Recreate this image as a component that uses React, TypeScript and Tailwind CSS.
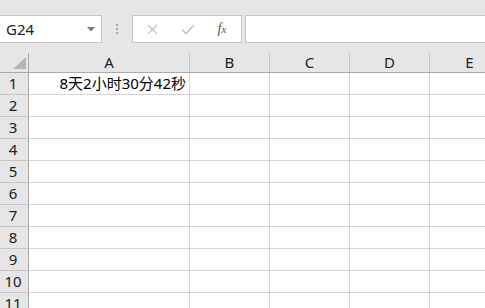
import React from 'react';

const cols = [
  { label: 'A', w: 'w-[161px]' },
  { label: 'B', w: 'w-[80px]' },
  { label: 'C', w: 'w-[80px]' },
  { label: 'D', w: 'w-[80px]' },
  { label: 'E', w: 'w-[80px]' },
];

const rows = Array.from({ length: 11 }, (_, i) => i + 1);

export default function App() {
  return (
    <div className="w-[485px] h-[308px] overflow-hidden bg-[#e6e6e6] font-['Noto_Sans','Noto_Sans_CJK_SC',sans-serif] text-black">
      {/* formula toolbar */}
      <div className="flex items-center pt-[15px] h-[53px] items-start">
        <div className="w-[102px] h-[28px] shrink-0 bg-white border border-l-0 border-[#c6c6c6] flex items-center justify-between pl-[6px] pr-[6px]">
          <span className="text-[15px] leading-none text-[#222]">G24</span>
          <svg width="8" height="5" viewBox="0 0 8 5">
            <path d="M0 0 H8 L4 4.5 Z" fill="#7a7a7a" />
          </svg>
        </div>
        <div className="w-[30px] h-[28px] shrink-0 flex flex-col items-center justify-center gap-[2px]">
          <span className="w-[2px] h-[2px] bg-[#a8a8a8]" />
          <span className="w-[2px] h-[2px] bg-[#a8a8a8]" />
          <span className="w-[2px] h-[2px] bg-[#a8a8a8]" />
        </div>
        <div className="w-[110px] h-[28px] shrink-0 bg-white border border-[#c6c6c6] flex items-center">
          <div className="w-[38px] flex justify-center">
            <svg width="11" height="11" viewBox="0 0 11 11">
              <path d="M1 1 L10 10 M10 1 L1 10" stroke="#c4c4c4" strokeWidth="1.3" fill="none" />
            </svg>
          </div>
          <div className="w-[34px] flex justify-center">
            <svg width="14" height="11" viewBox="0 0 14 11">
              <path d="M1 5.5 L5 9.5 L13 1" stroke="#c4c4c4" strokeWidth="1.6" fill="none" />
            </svg>
          </div>
          <div className="flex-1 flex justify-center pr-[2px]">
            <span className="font-['Liberation_Serif',serif] italic text-[14px] leading-none text-[#555]">
              f<span className="text-[11px]">x</span>
            </span>
          </div>
        </div>
        <div className="ml-[3px] w-[260px] h-[28px] shrink-0 bg-white border border-r-0 border-[#c6c6c6]" />
      </div>

      {/* column header */}
      <div className="flex h-[20px] border-b border-[#a9a9a9]">
        <div className="w-[29px] shrink-0 border-r border-[#a9a9a9] relative">
          <svg className="absolute left-[13px] top-[4px]" width="13" height="12" viewBox="0 0 13 12">
            <path d="M13 0 V12 H0 Z" fill="#b4b4b4" />
          </svg>
        </div>
        {cols.map(c => (
          <div
            key={c.label}
            className={`${c.w} shrink-0 border-r border-[#c6c6c6] flex items-center justify-center text-[15px] leading-none text-[#222]`}
          >
            {c.label}
          </div>
        ))}
      </div>

      {/* rows */}
      {rows.map(r => (
        <div key={r} className="flex h-[22px]">
          <div className="w-[29px] shrink-0 border-r border-b border-r-[#a9a9a9] border-b-[#c6c6c6] flex items-center justify-center text-[15px] leading-none text-[#222] pr-[2px]">
            {r}
          </div>
          {cols.map(c => (
            <div
              key={c.label}
              className={`${c.w} shrink-0 bg-white border-r border-b border-[#d4d4d4] flex items-center justify-end pr-[3px] text-[15px] leading-none whitespace-nowrap`}
            >
              {r === 1 && c.label === 'A' ? '8天2小时30分42秒' : ''}
            </div>
          ))}
        </div>
      ))}
    </div>
  );
}
